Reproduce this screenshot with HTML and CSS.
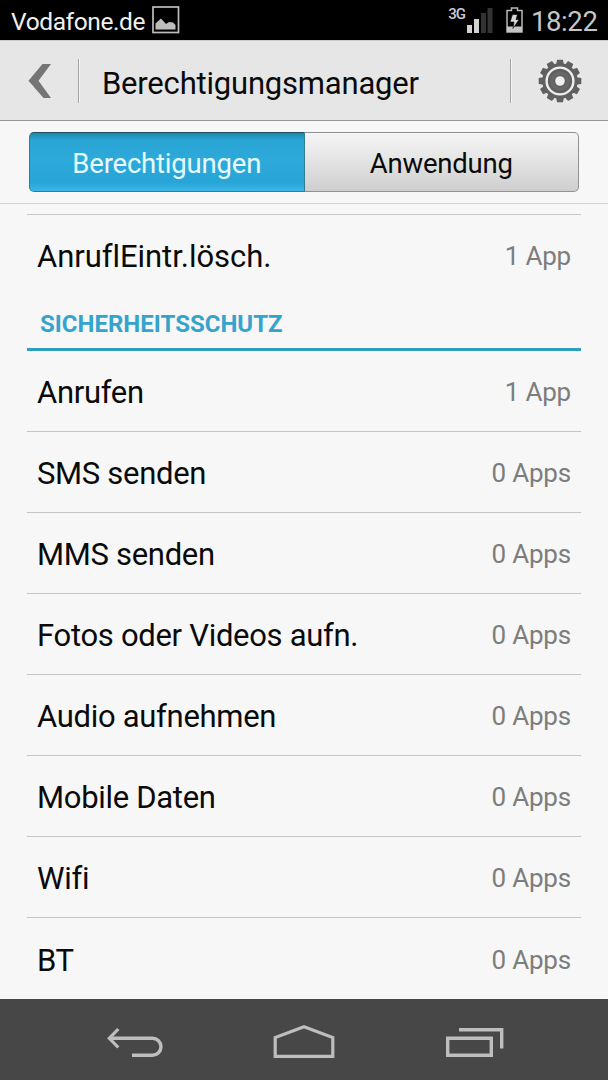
FILE: index.html
```html
<!DOCTYPE html>
<html lang="de">
<head>
<meta charset="utf-8">
<title>Berechtigungsmanager</title>
<link rel="stylesheet" href="styles.css">
</head>
<body>
<div class="status">
  <span class="carrier">Vodafone.de</span>
  <svg class="picture" width="28" height="28" viewBox="0 0 28 28"><rect x="1" y="1" width="25.500" height="25.500" fill="none" stroke="#bdbdbd" stroke-width="1.700"/><path d="M3.500 23.500v-6l5.500-5 5 5.500 3-2 4 .5 2.500 2.500v4.500z" fill="#bdbdbd"/></svg>
  <span class="network">3G</span>
  <svg class="signal" width="26" height="26" viewBox="0 0 26 26"><path d="M0 18h5v8H0zM7 12h5v14H7z" fill="#d2d2d2"/><path d="M14 6h5v20h-5zM20.500 1h5v25h-5z" fill="#333"/></svg>
  <svg class="battery" width="17" height="26" viewBox="0 0 17 26"><path d="M1 3.500h4.500V1h6v2.500H16V25H1z" fill="none" stroke="#b8b8b8" stroke-width="1.500"/><path d="M1 19.500h15V25H1z" fill="#c4c4c4"/><path d="M6.500 7.500h5l-1.500 5h3l-6 9 1-6.500h-4z" fill="#d8d8d8" stroke="#000" stroke-width=".6"/></svg>
  <span class="clock">18:22</span>
</div>
<header class="bar">
  <svg class="back" width="24" height="36" viewBox="0 0 24 36"><path d="M14.500 1H23L10.500 17.700 23 35h-7.500L.5 17.700z" fill="#757575"/></svg>
  <i class="divider"></i>
  <h1 class="title">Berechtigungsmanager</h1>
  <i class="divider"></i>
  <svg class="gear" width="44" height="44" viewBox="-22 -22 44 44">
    <g fill="#606060">
      <circle r="17.800"/>
      <path id="t" d="M-3.800-16.500-3-21.300H3L3.800-16.500V16.500L3 21.300H-3L-3.800 16.500z"/>
      <use href="#t" transform="rotate(30)"/><use href="#t" transform="rotate(60)"/><use href="#t" transform="rotate(90)"/><use href="#t" transform="rotate(120)"/><use href="#t" transform="rotate(150)"/>
    </g>
    <circle r="13.400" fill="#606060" stroke="#efefef" stroke-width="2.400"/>
    <circle r="8" fill="none" stroke="#686868" stroke-width="3"/>
    <circle r="4.800" fill="#f0f0f0"/>
  </svg>
</header>
<nav class="tabs">
  <div class="tab active">Berechtigungen</div>
  <div class="tab">Anwendung</div>
</nav>
<main class="list">
  <div class="row first"><span class="name">AnruflEintr.lösch.</span><span class="count">1 App</span></div>
  <h2 class="section">SICHERHEITSSCHUTZ</h2>
  <div class="row"><span class="name">Anrufen</span><span class="count">1 App</span></div>
  <div class="row"><span class="name">SMS senden</span><span class="count">0 Apps</span></div>
  <div class="row"><span class="name">MMS senden</span><span class="count">0 Apps</span></div>
  <div class="row"><span class="name">Fotos oder Videos aufn.</span><span class="count">0 Apps</span></div>
  <div class="row"><span class="name">Audio aufnehmen</span><span class="count">0 Apps</span></div>
  <div class="row"><span class="name">Mobile Daten</span><span class="count">0 Apps</span></div>
  <div class="row"><span class="name">Wifi</span><span class="count">0 Apps</span></div>
  <div class="row last"><span class="name">BT</span><span class="count">0 Apps</span></div>
</main>
<footer class="navbar">
  <svg width="58" height="32" viewBox="0 0 58 32"><path d="M3 12.300h43.500a8.500 8.500 0 0 1 0 17H26" fill="none" stroke="#bebebe" stroke-width="3.400"/><path d="M12.300 3 3.300 12.300l9 9.200" fill="none" stroke="#bebebe" stroke-width="3.200"/></svg>
  <svg class="home" width="62" height="34" viewBox="0 0 62 34"><path d="M2.200 32.300V13.500L31 2.700l28.800 10.800v18.800z" fill="none" stroke="#bebebe" stroke-width="3.200"/></svg>
  <svg width="58" height="30" viewBox="0 0 58 30"><path d="M1.700 10.200h43.600v17.100H1.700zM13 1.700h42.700V20.500" fill="none" stroke="#bebebe" stroke-width="3.400"/></svg>
</footer>
</body>
</html>
```

FILE: styles.css
```css
* { box-sizing: border-box; }
body {
  margin: 0;
  width: 608px;
  height: 1080px;
  overflow: hidden;
  display: flex;
  flex-direction: column;
  background: #f7f7f7;
  color: #0a0a0a;
  font-family: Roboto, "Noto Sans", sans-serif;
  font-variant-ligatures: none;
}
svg { display: block; flex: none; }
.status {
  height: 40px;
  flex: none;
  display: flex;
  align-items: center;
  padding: 0 10px 0 11px;
  background: #000;
  color: #f0f0f0;
}
.carrier { width: 135px; font-size: 24.5px; letter-spacing: -0.4px; line-height: 40px; white-space: nowrap; padding-top: 3px; }
.picture { margin-left: 6px; }
.network { margin-left: auto; font-size: 15px; letter-spacing: -1px; line-height: 16px; color: #ccc; align-self: flex-start; padding-top: 6px; font-weight: 500; }
.signal { margin: 0 13px 0 2px; }
.battery { margin-right: 8px; }
.clock { width: 67px; font-size: 27.5px; letter-spacing: -0.4px; line-height: 40px; color: #c6c6c6; white-space: nowrap; padding-top: 3px; }
.bar {
  height: 81px;
  flex: none;
  display: flex;
  align-items: center;
  padding: 0 26px 0 28px;
  background: #e6e6e6;
  border-top: 1px solid #c9c9c9;
  border-bottom: 1px solid #989898;
}
.divider { width: 2px; height: 44px; background: #a2a2a2; border-right: 1px solid #f5f5f5; }
.back { margin-right: 26px; }
.title {
  margin: 0 0 0 22px;
  flex: 1;
  font-size: 31px;
  font-weight: 400;
  line-height: 40px;
  padding-top: 6px;
  letter-spacing: -0.2px;
}
.gear { margin-left: 26px; }
.tabs {
  height: 83px;
  flex: none;
  display: flex;
  padding: 11px 29px 11px;
  border-bottom: 1px solid #d2d2d2;
}
.tab {
  flex: 1;
  display: flex;
  align-items: center;
  justify-content: center;
  padding-top: 2px;
  border: 1px solid #919191;
  border-left: 0;
  border-radius: 0 5px 5px 0;
  background: linear-gradient(#f5f5f5, #e5e5e5 45%, #cecece);
  font-size: 27.5px;
  letter-spacing: -0.2px;
  height: 60px;
}
.tab.active {
  border: 1px solid #337c96;
  border-top-color: #1c5060;
  border-radius: 5px 0 0 5px;
  background: linear-gradient(#2387ad, #29a5d4 13%, #2da9da 45%, #27a5d7 85%, #3bb7e6);
  color: #e7fcff;
}
.list { flex: 1; padding: 10px 27px 0; }
.row {
  height: 81px;
  display: flex;
  justify-content: space-between;
  align-items: center;
  padding: 3px 10px 0;
  border-bottom: 1px solid #c5c5c5;
}
.row.first { border-top: 1px solid #c9c9c9; border-bottom: 0; height: 83px; padding-top: 1px; }
.row.first .name { letter-spacing: -0.05px; }
.row.last { border-bottom: 0; }
.name { font-size: 31px; letter-spacing: -0.3px; line-height: 40px; white-space: nowrap; padding-top: 1px; }
.count { font-size: 26px; letter-spacing: -0.2px; line-height: 36px; color: #7d7d7d; padding-bottom: 1px; }
.section {
  margin: 0;
  height: 54px;
  padding: 11px 13px 0;
  border-bottom: 3px solid #2b9fbd;
  color: #35a4cc;
  font-size: 24px;
  font-weight: 700;
  line-height: 32px;
}
.navbar {
  height: 82px;
  flex: none;
  display: flex;
  justify-content: space-between;
  align-items: flex-end;
  padding: 0 104px 23px 106px;
  background: #474747;
}
.home { margin-right: 3px; }
```
